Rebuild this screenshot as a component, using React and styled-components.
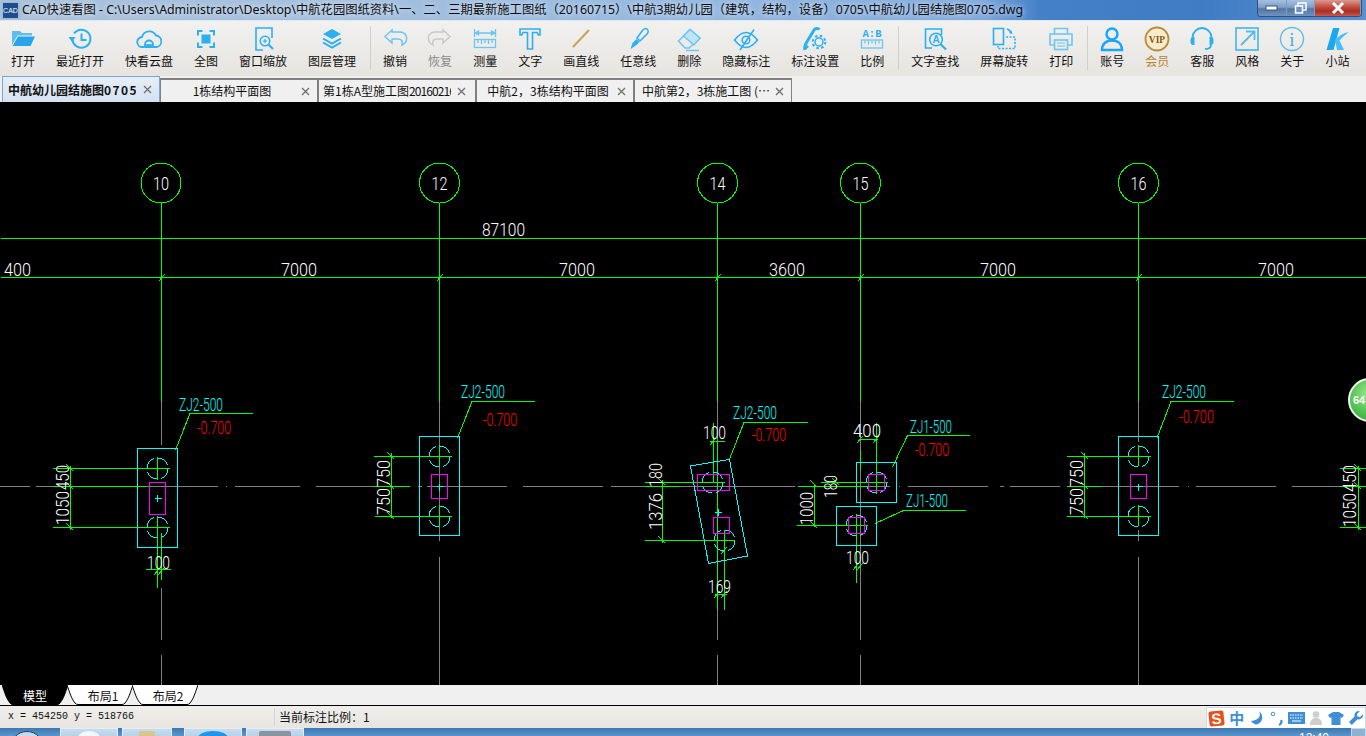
import React from "react";
import styled, { createGlobalStyle } from "styled-components";

const BLUE = "#2bb0f2";
const PALE = "#6cc6f2";

const GlobalStyle = createGlobalStyle`
  html, body { margin: 0; padding: 0; background: #000; }
  body { font-family: "Noto Sans CJK SC", "Noto Sans", sans-serif; font-size: 12px; }
`;

const Page = styled.div`
  width: 1366px;
  height: 736px;
  display: flex;
  flex-direction: column;
  overflow: hidden;
`;

/* title bar */
const TitleBar = styled.div`
  height: 21px;
  flex: none;
  display: flex;
  align-items: flex-start;
  background: linear-gradient(90deg, #a8c0da 0, #a4c0de 340px, #94b8e0 700px, #7fa9dc 980px, #4480c8 1040px, #3f7cc4 1200px, #5a8fd0 1366px);
  border-bottom: 1px solid #dfe8f2;
  box-sizing: border-box;
`;
const AppIcon = styled.div`
  width: 17px;
  height: 17px;
  margin: 2px 3px 0 2px;
  background: #1d4f8f;
  border: 1px solid #9db8d6;
  box-sizing: border-box;
  color: #fff;
  font: 7px/15px "Liberation Sans", sans-serif;
  text-align: center;
  overflow: hidden;
`;
const TitleText = styled.div`
  font: 12.3px/20px "Noto Sans", "Noto Sans CJK SC", sans-serif;
  color: #0c0c10;
  white-space: nowrap;
  text-shadow: 0 0 6px #fff;
  flex: 1;
  overflow: hidden;
`;
const WinButtons = styled.div`
  display: flex;
  height: 17px;
  margin-right: 4px;
  border: 1px solid #33507a;
  border-top: none;
  border-radius: 0 0 4px 4px;
  overflow: hidden;
  box-sizing: border-box;
`;
const WinButton = styled.div`
  width: ${(p) => p.$w}px;
  display: flex;
  align-items: center;
  justify-content: center;
  border-right: 1px solid #7b9cc6;
  background: ${(p) =>
    p.$close
      ? "linear-gradient(#d99a90 0, #c24a3a 45%, #a92f22 70%, #c9574a 100%)"
      : "linear-gradient(#a7c0de 0, #7f9fca 45%, #52779f 55%, #6f92bf 100%)"};
`;

/* toolbar */
const Toolbar = styled.div`
  height: 55px;
  flex: none;
  display: flex;
  padding-left: 0.5px;
  box-sizing: border-box;
  background: linear-gradient(#f1f1ef, #e7e4e0);
`;
const ToolItem = styled.div`
  padding: 5px 10.5px 0;
  display: flex;
  flex-direction: column;
  align-items: center;
  flex: none;
`;
const ToolIconBox = styled.div`
  width: 24px;
  height: 26px;
  display: flex;
  justify-content: center;
  svg { flex: none; margin: 0 -1px; }
`;
const ToolLabel = styled.div`
  font-size: 12px;
  line-height: 16px;
  margin-top: 1px;
  white-space: nowrap;
  color: ${(p) => p.$color || "#111"};
`;
const ToolSep = styled.div`
  width: 1px;
  height: 44px;
  margin: 5px 2px 0 3px;
  background: #d0cfcc;
  flex: none;
`;

/* drawing tabs */
const TabStrip = styled.div`
  height: 26px;
  flex: none;
  display: flex;
  padding-left: 2px;
  align-items: flex-end;
  background: #f0f0f0;
`;
const Tab = styled.div`
  width: 158px;
  height: ${(p) => (p.$active ? 26 : 24)}px;
  flex: none;
  box-sizing: border-box;
  display: flex;
  align-items: center;
  padding-left: ${(p) => p.$inset ?? 7}px;
  padding-right: ${(p) => (p.$active ? 0 : 3)}px;
  border: ${(p) => (p.$active ? "1px solid #7da6d8" : "1px solid #808080")};
  border-top-width: ${(p) => (p.$active ? 1 : 2)}px;
  border-bottom: none;
  background: ${(p) => (p.$active ? "linear-gradient(#e6eef8, #d5e2f1)" : "#f0f0f0")};
  font-weight: ${(p) => (p.$active ? 700 : 400)};
  color: #111;
`;
const TabText = styled.div`
  width: 128px;
  overflow: hidden;
  white-space: nowrap;
  text-align: ${(p) => (p.$left ? "left" : "center")};
  line-height: 16px;
  flex: none;
`;
const TabDigits = styled.span`
  letter-spacing: ${(p) => p.$track}px;
`;
const TabClose = styled.div`
  flex: 1;
  display: flex;
  justify-content: center;
`;

/* canvas */
const Canvas = styled.div`
  position: relative;
  flex: none;
  height: 583px;
  background: #000;
`;
const PlanSvg = styled.svg`
  display: block;
`;
const FloatBall = styled.div`
  position: absolute;
  left: 1348px;
  top: 276px;
  width: 44px;
  height: 44px;
  box-sizing: border-box;
  border-radius: 50%;
  border: 2px solid #eef5ea;
  background: radial-gradient(circle at 45% 35%, #9ce48e 0, #4fc24f 55%, #2d9a38 100%);
  color: #fff;
  font: 700 11px/40px "Liberation Sans", sans-serif;
  padding-left: 3px;
`;

/* model/layout sheet tabs */
const SheetBar = styled.div`
  height: 21px;
  flex: none;
  box-sizing: border-box;
  display: flex;
  padding-left: 2px;
  background: #f0f0f0;
  border-bottom: 1px solid #000;
`;
const SheetTab = styled.div`
  position: relative;
  width: 66px;
  height: 20px;
  margin-right: -1px;
  flex: none;
  display: flex;
  align-items: center;
  justify-content: center;
  padding-left: ${(p) => (p.$model ? 0 : 6)}px;
  box-sizing: border-box;
  color: ${(p) => (p.$model ? "#fff" : "#111")};
  font-size: 12px;
`;
const SheetShape = styled.svg`
  position: absolute;
  left: 0;
  top: 0;
`;
const SheetLabel = styled.span`
  position: relative;
`;

/* status bar */
const StatusBar = styled.div`
  height: 22px;
  flex: none;
  display: flex;
  background: linear-gradient(#f0eeec, #e8e5e1);
  color: #111;
`;
const Coords = styled.div`
  width: 266px;
  padding-left: 8px;
  font: 10px/22px "Liberation Mono", monospace;
  white-space: pre;
  flex: none;
`;
const ScaleInfo = styled.div`
  border-left: 1px solid #d6d4d0;
  padding-left: 4px;
  height: 18px;
  margin-top: 2px;
  line-height: 18px;
  font-size: 12px;
`;
const ImeBar = styled.div`
  margin-left: auto;
  margin-top: 1px;
  width: 160px;
  height: 21px;
  flex: none;
  display: flex;
  box-sizing: border-box;
  background: #fff;
  border: 1px solid #c9dcee;
  border-bottom: none;
`;
const ImeSlot = styled.div`
  width: 19.9px;
  flex: none;
  display: flex;
  align-items: center;
  justify-content: center;
  color: #3f8fd6;
  font-size: 15px;
  font-weight: 700;
  line-height: 20px;
`;
const SogouMark = styled.div`
  width: 15px;
  height: 15px;
  background: #e8501c;
  color: #fff;
  font: 700 15px/15px "Liberation Sans", sans-serif;
  text-align: center;
  border-radius: 2px;
  transform: rotate(-6deg);
`;

/* taskbar */
const Taskbar = styled.div`
  flex: 1;
  display: flex;
  align-items: flex-start;
  overflow: hidden;
  background: linear-gradient(#3c78b0, #5b97cd);
`;
const Orb = styled.div`
  width: 34px;
  height: 34px;
  margin: 3px 16px 0 10px;
  border-radius: 50%;
  border: 1px solid #26405c;
  background: #c9dbea;
  flex: none;
  box-sizing: border-box;
`;
const TaskButton = styled.div`
  width: ${(p) => p.$w}px;
  height: 20px;
  margin-left: ${(p) => p.$gap}px;
  flex: none;
  display: flex;
  justify-content: center;
  background: linear-gradient(#c8dcee, #9dc0e0);
  border: 1px solid #e5eef7;
  border-bottom: none;
  box-sizing: border-box;
  padding-top: 2px;
`;
const TaskGlyph = styled.div`
  width: ${(p) => p.$w}px;
  height: 14px;
  border-radius: ${(p) => (p.$round ? "50%" : "2px 2px 0 0")};
  background: ${(p) => p.$color};
`;
const Clock = styled.div`
  margin-left: auto;
  margin-top: 3px;
  color: #fff;
  font: 12px/14px "Liberation Sans", sans-serif;
`;
const ShowDesktop = styled.div`
  width: 13px;
  height: 10px;
  margin-left: 22px;
  flex: none;
  background: #8fb2d2;
  border: 1px solid #c6d9ea;
`;

/* toolbar drawings, all on a 26 box */
const Ico = ({ children, stroke = BLUE, sw = 2 }) => (
  <svg width="26" height="26" viewBox="0 0 26 26" fill="none" stroke={stroke} strokeWidth={sw}>
    {children}
  </svg>
);

const icons = {
  open: (
    <Ico stroke="none">
      <path d="M2 5h8l2 2h10v2.500H7.500L2 19z" fill="#62bcee" />
      <path d="M8 10.500h17L20.500 20H2.500z" fill="#27a5ec" />
    </Ico>
  ),
  recent: (
    <Ico>
      <path d="M7 7.500a9 9 0 1 1-1.500 6.500" />
      <path d="M1.500 11h7L5 16z" fill={BLUE} stroke="none" />
      <path d="M14.500 7.500v6.500h5" />
    </Ico>
  ),
  cloud: (
    <Ico sw="1.800">
      <path d="M8 21H6.500a5 5 0 0 1-.5-10 7.500 7.500 0 0 1 14-1.500 5.800 5.800 0 0 1 .5 11.500H18" />
      <path d="M9 21v-2.500a4 4 0 0 1 8 0V21z" />
      <path d="M9 19h8" />
    </Ico>
  ),
  fit: (
    <Ico>
      <path d="M5 9.500V5h4.500M16.500 5H21v4.500M21 16.500V21h-4.500M9.500 21H5v-4.500" />
      <rect x="8.500" y="8.500" width="9" height="9" fill={BLUE} stroke="none" />
    </Ico>
  ),
  zoomWin: (
    <Ico sw="1.600">
      <path d="M13 24H6V2h16v10" />
      <circle cx="15" cy="15" r="4.700" />
      <path d="M18.500 18.500L23 23" strokeWidth="2.200" />
      <path d="M13 15h4M15 13v4" strokeWidth="1.200" />
    </Ico>
  ),
  layers: (
    <Ico>
      <path d="M13 3l9 5-9 5-9-5z" fill={BLUE} stroke="none" />
      <path d="M4 12.500l9 5 9-5M4 16.500l9 5 9-5" />
    </Ico>
  ),
  undo: (
    <Ico stroke={PALE} sw="1.500">
      <path d="M10 4L3 10.500l7 6.500v-4h6c3 0 5 1.500 4 6 4-2 5-5 4.500-8-.5-3.500-3.500-5-7.500-5h-7z" />
    </Ico>
  ),
  redo: (
    <Ico stroke="#c9c9c9" sw="1.500">
      <path d="M16 4l7 6.500-7 6.500v-4h-6c-3 0-5 1.500-4 6-4-2-5-5-4.500-8 .5-3.500 3.500-5 7.500-5h7z" />
    </Ico>
  ),
  measure: (
    <Ico stroke={PALE} sw="1.300">
      <path d="M2.500 3v8M23.500 3v8M3 7h20" />
      <path d="M3 7l3.500-2v4zM23 7l-3.500-2v4z" fill={PALE} />
      <rect x="2.500" y="13.500" width="21" height="8" />
      <path d="M6 14v3M9.500 14v4M13 14v3M16.500 14v4M20 14v3" />
    </Ico>
  ),
  text: (
    <Ico sw="1.600">
      <path d="M3 3h20v6h-1.800l-1-2.500H15.500V23h-5V6.500H5.800l-1 2.500H3z" />
    </Ico>
  ),
  line: (
    <Ico stroke="#c9a457">
      <path d="M5 21L21 4" />
    </Ico>
  ),
  brush: (
    <Ico sw="1.500">
      <path d="M22 3c1.500 1 1.500 3 0 5l-7 7-3-3 5.500-7.500C19 2.500 21 2 22 3z" />
      <path d="M11.500 13l3 3-3 3-6 4 2-6z" fill={BLUE} stroke="none" />
    </Ico>
  ),
  eraser: (
    <Ico stroke={PALE} sw="1.500">
      <path d="M2.500 15L14 3.500 24 12 13 22H9z" />
      <path d="M7.500 10L18 19l6-7-10-8.500z" fill="#bfe4f7" />
      <path d="M10 24.500h13" />
    </Ico>
  ),
  eye: (
    <Ico sw="1.600">
      <path d="M1.500 14c4-5 7.500-7.500 11.500-7.500S20.500 9 24.500 14c-4 5-7.500 7.500-11.500 7.500S5.500 19 1.500 14z" />
      <circle cx="13" cy="14" r="3.800" />
      <path d="M21 3.500L7 24" />
    </Ico>
  ),
  markSet: (
    <Ico>
      <path d="M3 24c-1-3 0-5 1.500-7.500L12 4c1.500-2 4-2 5.500-.5" fill="none" strokeWidth="3" />
      <path d="M3 24l2-5 2 2z" fill={BLUE} stroke="none" />
      <circle cx="17" cy="16" r="4" strokeWidth="1.500" />
      <circle cx="17" cy="16" r="6.300" strokeWidth="2" strokeDasharray="2.500 2.450" />
    </Ico>
  ),
  ratio: (
    <Ico stroke={PALE} sw="1.300">
      <text x="13" y="10.500" textAnchor="middle" fontFamily="Liberation Mono" fontWeight="700" fontSize="10.500" fill={BLUE} stroke="none">
        A:B
      </text>
      <rect x="2.500" y="14" width="21" height="8" />
      <path d="M6 14.500v3M9.500 14.500v4M13 14.500v3M16.500 14.500v4M20 14.500v3" />
    </Ico>
  ),
  findText: (
    <Ico sw="1.600">
      <path d="M10 22H3.500V3h16v6" />
      <circle cx="14" cy="13.500" r="6.300" />
      <path d="M18.500 18L24 23.500" strokeWidth="2.200" />
      <text x="14" y="17" textAnchor="middle" fontFamily="Liberation Sans" fontSize="10" fontWeight="700" fill={BLUE} stroke="none">
        A
      </text>
    </Ico>
  ),
  rotate: (
    <Ico sw="1.600">
      <rect x="2.500" y="2.500" width="10" height="16" />
      <path d="M15 11h9v11.500H7V20" strokeDasharray="2 1.500" />
      <path d="M16 3c2 .5 3.500 2 4 4" />
      <path d="M21.500 8l-3.500-1 2.500-2.500z" fill={BLUE} stroke="none" />
    </Ico>
  ),
  print: (
    <Ico stroke={PALE} sw="1.600">
      <path d="M6.500 8V2.500h13V8" />
      <path d="M6 19H2V8h22v11h-4" />
      <rect x="6.500" y="14" width="13" height="9.500" />
      <path d="M9 17h8M9 20h8" strokeWidth="1" />
    </Ico>
  ),
  user: (
    <Ico stroke="#15a7f8" sw="2.400">
      <circle cx="13" cy="8" r="5.500" />
      <path d="M3 24c0-6 4-9.500 10-9.500S23 18 23 24z" />
    </Ico>
  ),
  vip: (
    <Ico stroke="#b98b3c" sw="1.800">
      <circle cx="13" cy="13" r="11.500" fill="#f7edcc" />
      <text x="13" y="16.500" textAnchor="middle" fontFamily="Liberation Serif" fontSize="9.500" fontWeight="700" fill="#85570f" stroke="none">
        VIP
      </text>
    </Ico>
  ),
  headset: (
    <Ico sw="1.800">
      <path d="M3.500 14v-2.500a9.500 9.500 0 0 1 19 0V14" />
      <path d="M1.500 14a3 3 0 0 1 3-3h1v8h-1a3 3 0 0 1-3-3zM24.500 14a3 3 0 0 0-3-3h-1v8h1a3 3 0 0 0 3-3z" fill={BLUE} stroke="none" />
      <path d="M22 19c0 2.500-2.500 4-6 4" />
    </Ico>
  ),
  style: (
    <Ico stroke="#58bbea" sw="1.800">
      <rect x="2" y="2" width="22" height="22" />
      <path d="M7 19L20 6M12 5.500h8.500V14" />
    </Ico>
  ),
  about: (
    <Ico stroke="#5fbdea" sw="1.400">
      <circle cx="13" cy="13" r="11.500" />
      <text x="13" y="20" textAnchor="middle" fontFamily="Liberation Serif" fontSize="19" fill="#3aaee6" stroke="none">
        i
      </text>
    </Ico>
  ),
  site: (
    <Ico stroke="none">
      <path d="M9 2h6.500L9.500 24H2.500z" fill="#1aa9ee" />
      <path d="M11 13.500C15 10 19 7 25 6c-3 2-7 5.500-9.500 8.500L20 24h-7z" fill="#46c0f4" />
    </Ico>
  ),
};

const tools = [
  ["open", "打开"], ["recent", "最近打开"], ["cloud", "快看云盘"], ["fit", "全图"], ["zoomWin", "窗口缩放"], ["layers", "图层管理"], "|",
  ["undo", "撤销"], ["redo", "恢复", "#8a8a8a"], ["measure", "测量"], ["text", "文字"], ["line", "画直线"], ["brush", "任意线"], ["eraser", "删除"], ["eye", "隐藏标注"], ["markSet", "标注设置"], ["ratio", "比例"], "|",
  ["findText", "文字查找"], ["rotate", "屏幕旋转"], ["print", "打印"], "|",
  ["user", "账号"], ["vip", "会员", "#b9862f"], ["headset", "客服"], ["style", "风格"], ["about", "关于"], ["site", "小站"],
];

const tabs = [
  { text: "中航幼儿园结施图", digits: "0705", track: 1.4, active: true, left: true, inset: 5 },
  { text: "1栋结构平面图" },
  { text: "第1栋A型施工图", digits: "20160216", track: -0.9, inset: 4, left: true },
  { text: "中航2，3栋结构平面图" },
  { text: "中航第2，3栋施工图 (…" },
];

/* plan data, in page coordinates */
const axes = [161.5, 439.5, 717.5, 860.5, 1138.5];
const bubbles = [["10", 161], ["12", 439.5], ["14", 717.5], ["15", 860.5], ["16", 1138.5]];

const tickV = (x, y) => `M${x - 4} ${y - 4}L${x + 3} ${y + 3}`;
const tickH = (x, y) => `M${x - 3} ${y + 4}L${x + 3} ${y - 3}`;

const greenPaths = [
  "M1 238.5H1366M1 277.5H1366",
  ...axes.map((x) => `M${x} 203V402`),
  ...axes.map((x) => tickH(x, 277.5)),
  // column 10
  "M53 468.5H170M53 486.5H146M53 527.5H170M70.500 466V530M157.500 516V588M161.500 533V580M157.500 457V480M146 569.500H171",
  tickV(70, 468), tickV(70, 486), tickV(70, 527), tickH(157, 571), tickH(161, 571),
  "M175.500 450L190 413.500H253",
  // column 12
  "M374 456.5H452M374 486.5H410M375 516.5H452M391.500 453V518M439.500 445V466M439.500 505V526",
  tickV(391, 456), tickV(391, 486), tickV(391, 516),
  "M457.500 438L472 401.500H535",
  // column 14
  "M645 482.5H725M645 486.5H680M645 540.5H735M662.500 480V543M717.500 442V610M713.500 423V483M724.500 530V610M710 441.500H725M715 594.500H727",
  tickV(662, 482), tickV(662, 540), tickH(713, 441), tickH(717, 594), tickH(724, 594), tickH(724, 550),
  "M729.500 459L744 422.500H808",
  // column 15
  "M821 482.5H888M798 486.5H867M797 525.5H868M814.500 484V527M876.500 423V494M856.500 514V583M860.500 450V470M859 439.500H878",
  tickV(814, 484), tickV(814, 525), tickV(836, 482), tickH(860, 439), tickH(876, 439), tickH(856, 566), tickH(860, 566),
  "M892.500 467L907.500 435.500H970M875 523.500L903.500 510.500H966",
  // column 16
  "M1067 456.5H1151M1067 486.5H1102M1067 516.5H1151M1084.500 453V518M1138.500 445V466M1138.500 505V526",
  tickV(1085, 456), tickV(1085, 486), tickV(1085, 516),
  "M1157 438L1171 401.500H1234",
  // cut off on the right edge
  "M1340 468.5H1366M1340 486.5H1366M1340 527.5H1366M1358.500 466V530",
  tickV(1358, 468), tickV(1358, 486), tickV(1358, 527),
].join("");

const grayH = [[0, 30], [36, 218], [235, 300], [316, 410], [418, 422], [427, 507], [523, 603], [611, 795], [798, 890], [908, 988], [1000, 1004], [1010, 1060], [1067, 1179], [1196, 1276], [1292, 1366]];
const grayPaths = [
  ...grayH.map(([a, b]) => `M${a} 486.5H${b}`),
  "M226 486.5h1M899 486.5h1M1188 486.5h1",
  "M161.500 402V445M161.500 588V640M161.500 655V685",
  "M439.500 402V541M439.500 557V685",
  "M717.500 402V442M717.500 610V640M717.500 655V685",
  "M860.500 402V450M860.500 470V640M860.500 655V685",
  "M1138.500 402V442M1138.500 530V541M1138.500 557V685",
].join("");

const cyanRects = [
  [137.5, 448.5, 40, 99],
  [419.5, 436.5, 40, 99],
  [1118.5, 436.5, 40, 99],
  [856.5, 462.5, 40, 40],
  [836.5, 506.5, 40, 39],
];
const magentaRects = [
  [149.5, 482.5, 16, 32],
  [431.5, 474.5, 16, 24],
  [1130.5, 474.5, 16, 24],
  [697.5, 474.5, 32, 16],
  [713.5, 517.5, 16, 16],
  [868.5, 474.5, 16, 16],
  [848.5, 517.5, 16, 16],
];
const footCircles = [
  [157.5, 468.5], [157.5, 527.5], [439.5, 456.5], [439.5, 516.5], [1138.5, 456.5], [1138.5, 516.5],
  [712.5, 482.5], [724.5, 540.5], [876.5, 482.5], [856.5, 525.5],
];
const crosses = [[157.5, 498], [439.5, 486.5], [1138.5, 486.5], [718, 512]];

const labels = [
  // text, x, baseline, width, colour
  ["87100", 482, 236, 43], ["400", 4, 276, 27], ["7000", 281, 276, 36], ["7000", 559, 276, 36], ["3600", 769, 276, 36], ["7000", 980, 276, 36], ["7000", 1258, 276, 36],
  ["ZJ2-500", 179, 411, 44, "#00ffff"], ["-0.700", 197, 434, 34, "#ff0000"], ["100", 147, 569, 23],
  ["ZJ2-500", 461, 398, 44, "#00ffff"], ["-0.700", 483, 426, 34, "#ff0000"],
  ["ZJ2-500", 733, 419, 44, "#00ffff"], ["-0.700", 752, 441, 34, "#ff0000"], ["100", 703, 439, 23], ["169", 708, 593, 23],
  ["ZJ1-500", 910, 433, 42, "#00ffff"], ["-0.700", 915, 456, 34, "#ff0000"], ["400", 853, 437, 28],
  ["ZJ1-500", 906, 507, 42, "#00ffff"], ["100", 846, 564, 23],
  ["ZJ2-500", 1162, 398, 44, "#00ffff"], ["-0.700", 1179, 423, 35, "#ff0000"],
];
const sideLabels = [
  // rotated text, baseline x, bottom y, length
  ["1050", 69, 525, 34], ["450", 69, 490, 25],
  ["750", 390, 515, 27], ["750", 390, 487, 27],
  ["1376", 662, 530, 37], ["180", 662, 487, 24],
  ["1000", 813, 525, 33], ["180", 837, 498, 23],
  ["750", 1083, 515, 27], ["750", 1083, 487, 27],
  ["1050", 1356, 527, 34], ["450", 1356, 492, 27],
];

const CadText = ({ x, y, w, fill = "#fff", rotate, children }) => (
  <text
    x={x}
    y={y}
    textLength={w}
    lengthAdjust="spacingAndGlyphs"
    fontFamily="Roboto"
    fontWeight="300"
    fontSize="18"
    fill={fill}
    transform={rotate ? `rotate(-90 ${x} ${y})` : undefined}
  >
    {children}
  </text>
);

const Plan = () => (
  <PlanSvg width="1366" height="583" viewBox="0 102 1366 583" fill="none" shapeRendering="crispEdges">
    <path d={grayPaths} stroke="#808080" />
    <path d={greenPaths} stroke="#00ff00" />
    {bubbles.map(([n, x]) => (
      <g key={n}>
        <circle cx={x} cy="183" r="20" stroke="#00ff00" />
        <CadText x={x - 8} y={190} w={16}>{n}</CadText>
      </g>
    ))}
    {cyanRects.map((r, i) => (
      <rect key={i} x={r[0]} y={r[1]} width={r[2]} height={r[3]} stroke="#00ffff" />
    ))}
    <path d="M690.500 466L729.500 459.500L747.500 556L708.500 563.500Z" stroke="#00ffff" />
    {footCircles.map(([x, y], i) => (
      <circle key={i} cx={x} cy={y} r="10.500" stroke="#00ffff" strokeDasharray="12.500 4" />
    ))}
    {crosses.map(([x, y], i) => (
      <path key={i} d={`M${x - 3} ${y}h7M${x} ${y - 3}v7`} stroke="#00ffff" />
    ))}
    {magentaRects.map((r, i) => (
      <rect key={i} x={r[0]} y={r[1]} width={r[2]} height={r[3]} stroke="#ff00ff" />
    ))}
    {labels.map(([t, x, y, w, c], i) => (
      <CadText key={i} x={x} y={y} w={w} fill={c}>{t}</CadText>
    ))}
    {sideLabels.map(([t, x, y, w], i) => (
      <CadText key={i} x={x} y={y} w={w} rotate>{t}</CadText>
    ))}
  </PlanSvg>
);

const sheetPath = (w) =>
  `M0 0C3 8 4 13 8 18Q9 19.500 11 19.500H${w - 11}Q${w - 9} 19.500 ${w - 8} 18C${w - 4} 13 ${w - 3} 8 ${w} 0`;

const Sheet = ({ model, children }) => (
  <SheetTab $model={model}>
    <SheetShape width="66" height="20" viewBox="0 0 66 20">
      <path d={sheetPath(66)} fill={model ? "#000" : "#fff"} stroke="#000" strokeWidth="1" />
    </SheetShape>
    <SheetLabel>{children}</SheetLabel>
  </SheetTab>
);

const CloseMark = () => (
  <svg width="11" height="11" viewBox="0 0 11 11" stroke="#6e6e6e" strokeWidth="1.300">
    <path d="M2 2l7 7M9 2l-7 7" />
  </svg>
);

export default function App() {
  return (
    <Page>
      <GlobalStyle />
      <TitleBar>
        <AppIcon>CAD</AppIcon>
        <TitleText>
          CAD快速看图 - C:\Users\Administrator\Desktop\中航花园图纸资料\一、二、三期最新施工图纸（20160715）\中航3期幼儿园（建筑，结构，设备）0705\中航幼儿园结施图0705.dwg
        </TitleText>
        <WinButtons>
          <WinButton $w={28}>
            <svg width="14" height="6"><rect x="1" y="1" width="11" height="4" fill="#fff" stroke="#3a5578" /></svg>
          </WinButton>
          <WinButton $w={27}>
            <svg width="13" height="12" fill="none" stroke="#fff" strokeWidth="1.500"><rect x="4" y="1" width="8" height="7" /><rect x="1.500" y="4" width="7" height="7" fill="#6f92bf" /></svg>
          </WinButton>
          <WinButton $w={45} $close>
            <svg width="14" height="12" stroke="#fff" strokeWidth="3"><path d="M2 1l10 10M12 1L2 11" /></svg>
          </WinButton>
        </WinButtons>
      </TitleBar>

      <Toolbar>
        {tools.map((t, i) =>
          t === "|" ? (
            <ToolSep key={i} />
          ) : (
            <ToolItem key={t[0]}>
              <ToolIconBox>{icons[t[0]]}</ToolIconBox>
              <ToolLabel $color={t[2]}>{t[1]}</ToolLabel>
            </ToolItem>
          )
        )}
      </Toolbar>

      <TabStrip>
        {tabs.map((t) => (
          <Tab key={t.text} $active={t.active} $inset={t.inset}>
            <TabText $left={t.left}>
              {t.text}
              {t.digits && <TabDigits $track={t.track}>{t.digits}</TabDigits>}
            </TabText>
            <TabClose><CloseMark /></TabClose>
          </Tab>
        ))}
      </TabStrip>

      <Canvas>
        <Plan />
        <FloatBall>64</FloatBall>
      </Canvas>

      <SheetBar>
        <Sheet model>模型</Sheet>
        <Sheet>布局1</Sheet>
        <Sheet>布局2</Sheet>
      </SheetBar>

      <StatusBar>
        <Coords>x = 454250 y = 518766</Coords>
        <ScaleInfo>当前标注比例：1</ScaleInfo>
        <ImeBar>
          <ImeSlot><SogouMark>S</SogouMark></ImeSlot>
          <ImeSlot>中</ImeSlot>
          <ImeSlot>
            <svg width="14" height="14" viewBox="0 0 14 14"><path d="M9 0c2 4 1 9-8 10 2 3 5 4 7 3 5-2 6-9 1-13z" fill="#3f8fd6" /></svg>
          </ImeSlot>
          <ImeSlot>
            <svg width="14" height="16" viewBox="0 0 14 16" fill="none" stroke="#3f8fd6"><circle cx="3" cy="4" r="1.800" /><path d="M11 10c1 2 0 4-2 5" strokeWidth="2.200" /></svg>
          </ImeSlot>
          <ImeSlot>
            <svg width="17" height="12" viewBox="0 0 17 12"><rect width="17" height="12" fill="#3f8fd6" /><path d="M2 3h13M2 6h13" stroke="#fff" strokeDasharray="1.500 1" /><path d="M4 9h9" stroke="#fff" /></svg>
          </ImeSlot>
          <ImeSlot>
            <svg width="12" height="14" viewBox="0 0 12 14" fill="#cfcfcf"><circle cx="6" cy="3.500" r="3.300" /><path d="M0 14c0-5 2-7 6-7s6 2 6 7z" /></svg>
          </ImeSlot>
          <ImeSlot>
            <svg width="16" height="13" viewBox="0 0 16 13" fill="#3f8fd6"><path d="M5 0h6l5 3-2 3-1.500-.8V13h-9V5.200L2 6 0 3z" /></svg>
          </ImeSlot>
          <ImeSlot>
            <svg width="14" height="14" viewBox="0 0 14 14" fill="#3f8fd6"><path d="M9.500 0a4 4 0 0 0-3.800 5.300L0 11l2.800 3 5.800-5.700A4.300 4.300 0 0 0 14 3.500l-3 2.500-2.500-.5-.5-2.500L10.800.2A4 4 0 0 0 9.500 0z" /></svg>
          </ImeSlot>
        </ImeBar>
      </StatusBar>

      <Taskbar>
        <Orb />
        <TaskButton $w={58} $gap={0}><TaskGlyph $w={22} $round $color="#f4f7fa" /></TaskButton>
        <TaskButton $w={50} $gap={4}><TaskGlyph $w={16} $color="#d9c68c" /></TaskButton>
        <TaskButton $w={58} $gap={12}><TaskGlyph $w={30} $round $color="#1e96ea" /></TaskButton>
        <TaskButton $w={58} $gap={4}><TaskGlyph $w={32} $color="#8a93a0" /></TaskButton>
        <Clock>12:40</Clock>
        <ShowDesktop />
      </Taskbar>
    </Page>
  );
}
